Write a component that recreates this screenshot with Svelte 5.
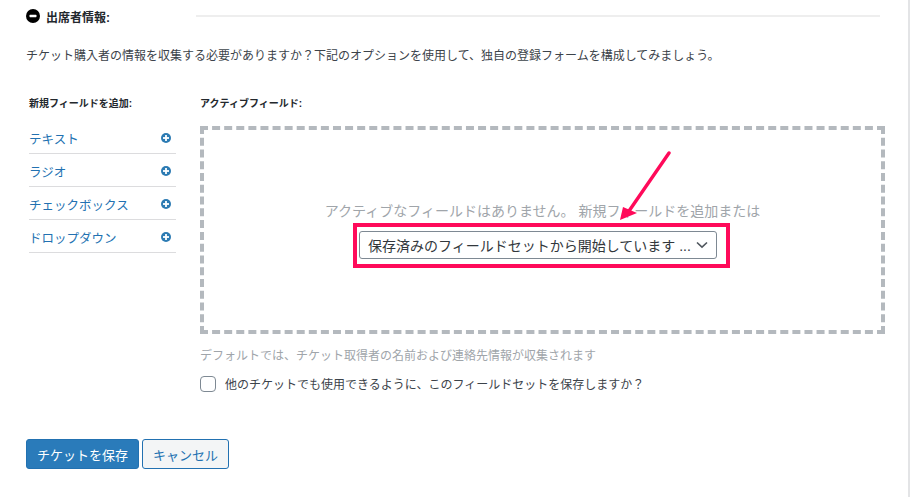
<script>
  const fields = ['テキスト', 'ラジオ', 'チェックボックス', 'ドロップダウン'];
</script>

<div class="page">
  <header class="head">
    <svg class="minus" width="14" height="14" viewBox="0 0 14 14" aria-hidden="true">
      <circle cx="7" cy="7" r="7" fill="#000" />
      <rect x="3.5" y="5.8" width="7" height="2.4" rx="0.6" fill="#fff" />
    </svg>
    <span class="title">出席者情報:</span>
    <span class="rule"></span>
  </header>

  <p class="desc">チケット購入者の情報を収集する必要がありますか？下記のオプションを使用して、独自の登録フォームを構成してみましょう。</p>

  <div class="cols">
    <aside class="side">
      <h4>新規フィールドを追加:</h4>
      <ul>
        {#each fields as f}
          <li>
            <span>{f}</span>
            <svg width="10" height="10" viewBox="0 0 10 10" aria-hidden="true">
              <circle cx="5" cy="5" r="5" fill="#2c7bb3" />
              <rect x="2" y="4.1" width="6" height="1.8" fill="#fff" />
              <rect x="4.1" y="2" width="1.8" height="6" fill="#fff" />
            </svg>
          </li>
        {/each}
      </ul>
    </aside>

    <section class="main">
      <h4>アクティブフィールド:</h4>
      <div class="drop">
        <p class="empty">アクティブなフィールドはありません。 新規フィールドを追加または</p>
        <div class="select">
          <span>保存済みのフィールドセットから開始しています ...</span>
          <svg width="12" height="8" viewBox="0 0 12 8" aria-hidden="true">
            <path d="M1 1.5 6 6.2l5-4.7" fill="none" stroke="#50575e" stroke-width="1.6" />
          </svg>
        </div>
        <div class="mark"></div>
        <svg class="arrow" width="60" height="76" viewBox="0 0 60 76" aria-hidden="true">
          <path d="M54 2 14 60" fill="none" stroke="#ff0a5a" stroke-width="3.4" stroke-linecap="round" />
          <path d="M5 69 8 56 22 62Z" fill="#ff0a5a" />
        </svg>
      </div>
      <p class="hint">デフォルトでは、チケット取得者の名前および連絡先情報が収集されます</p>
      <label class="check">
        <span class="box"></span>
        <span>他のチケットでも使用できるように、このフィールドセットを保存しますか？</span>
      </label>
    </section>
  </div>

  <div class="actions">
    <button class="save">チケットを保存</button>
    <button class="cancel">キャンセル</button>
  </div>

  <span class="edge"></span>
</div>

<style>
  :global(body) {
    margin: 0;
    background: #fff;
  }
  .page {
    position: relative;
    box-sizing: border-box;
    width: 910px;
    height: 497px;
    overflow: hidden;
    padding: 9px 0 0 26px;
    font-family: "Liberation Sans", "Noto Sans CJK JP", sans-serif;
    color: #3c434a;
  }
  .edge {
    position: absolute;
    right: 0;
    top: 0;
    bottom: 0;
    width: 2px;
    background: #e3e4e6;
  }
  .head {
    display: flex;
    align-items: center;
    height: 14px;
  }
  .minus {
    flex: none;
  }
  .title {
    margin-left: 6px;
    width: 150px;
    font-size: 12px;
    font-weight: 700;
    color: #23282d;
  }
  .rule {
    width: 684px;
    height: 2px;
    background: #eeeeee;
  }
  .desc {
    margin: 26px 0 0;
    font-size: 12px;
    line-height: 15px;
    color: #3c434a;
  }
  .cols {
    display: flex;
    margin-top: 33px;
  }
  .side {
    width: 147px;
    margin-left: 3px;
  }
  h4 {
    margin: 0;
    font-size: 10px;
    line-height: 13px;
    font-weight: 700;
    color: #23282d;
  }
  ul {
    list-style: none;
    margin: 11px 0 0;
    padding: 0;
  }
  li {
    display: flex;
    align-items: center;
    justify-content: space-between;
    box-sizing: border-box;
    height: 33px;
    padding: 2px 5px 0 0;
    border-bottom: 1px solid #dcdcde;
    font-size: 12.5px;
    color: #2271b1;
  }
  .main {
    width: 685px;
    margin-left: 24px;
  }
  .drop {
    position: relative;
    box-sizing: border-box;
    height: 208px;
    margin-top: 16px;
    border: 4px dashed #b4b9be;
    text-align: center;
  }
  .empty {
    margin: 0;
    padding-top: 71px;
    font-size: 14px;
    line-height: 20px;
    color: #a0a5aa;
  }
  .select {
    display: flex;
    align-items: center;
    justify-content: space-between;
    box-sizing: border-box;
    width: 358px;
    height: 28px;
    margin: 10px 0 0 155px;
    padding: 0 8px 0 8px;
    border: 1px solid #7e8993;
    border-radius: 3px;
    font-size: 14px;
    color: #32373c;
    white-space: nowrap;
  }
  .mark {
    position: absolute;
    left: 149px;
    top: 93px;
    box-sizing: border-box;
    width: 377px;
    height: 45px;
    border: 4px solid #ff0a5a;
  }
  .arrow {
    position: absolute;
    left: 411px;
    top: 21px;
  }
  .hint {
    margin: 15px 0 0;
    font-size: 12px;
    line-height: 15px;
    color: #a0a5aa;
  }
  .check {
    display: flex;
    align-items: center;
    margin-top: 11px;
    font-size: 12px;
    color: #3c434a;
  }
  .box {
    box-sizing: border-box;
    width: 16px;
    height: 16px;
    margin-right: 9px;
    border: 1px solid #7e8993;
    border-radius: 4px;
  }
  .actions {
    display: flex;
    gap: 3px;
    margin-top: 47px;
  }
  button {
    box-sizing: border-box;
    height: 30px;
    padding: 0;
    border-radius: 3px;
    font-family: inherit;
    font-size: 13px;
  }
  .save {
    width: 113px;
    border: 1px solid #2271b1;
    background: #2a7bba;
    color: #fff;
  }
  .cancel {
    width: 87px;
    border: 1px solid #2271b1;
    background: #f3f5f6;
    color: #2271b1;
  }
</style>
